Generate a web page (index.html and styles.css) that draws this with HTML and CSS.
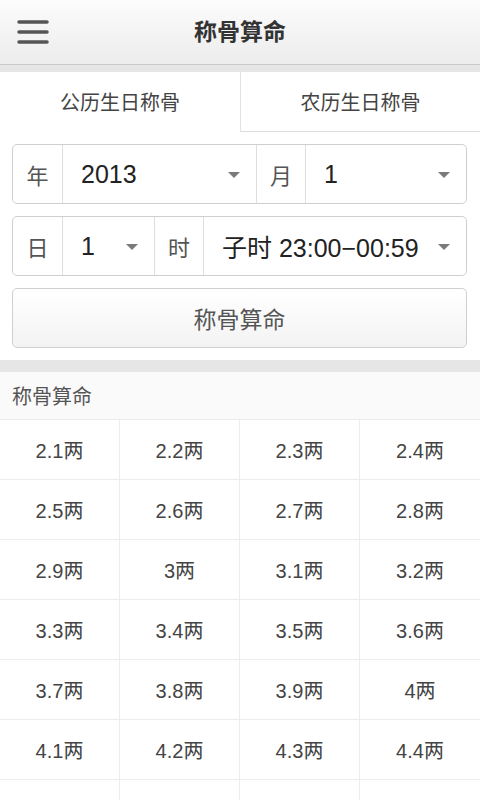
FILE: index.html
```html
<!DOCTYPE html>
<html lang="zh">
<head>
<meta charset="utf-8">
<link rel="stylesheet" href="styles.css">
</head>
<body>
<header class="topbar">
  <button class="menu" aria-label="menu">
    <svg width="32" height="24" viewBox="0 0 32 24"><g stroke="#555" stroke-width="3.5" stroke-linecap="round"><line x1="2" y1="2" x2="30" y2="2"/><line x1="2" y1="12" x2="30" y2="12"/><line x1="2" y1="22" x2="30" y2="22"/></g></svg>
  </button>
  <h1 class="title">称骨算命</h1>
</header>
<div class="band"></div>
<nav class="tabs">
  <div class="tab active">公历生日称骨</div>
  <div class="tab">农历生日称骨</div>
</nav>
<section class="form">
  <div class="selrow row1">
    <div class="lbl">年</div>
    <div class="val"><span>2013</span><i class="arrow"></i></div>
    <div class="lbl">月</div>
    <div class="val"><span>1</span><i class="arrow"></i></div>
  </div>
  <div class="selrow row2">
    <div class="lbl">日</div>
    <div class="val"><span>1</span><i class="arrow"></i></div>
    <div class="lbl">时</div>
    <div class="val"><span>子时 23:00−00:59</span><i class="arrow"></i></div>
  </div>
  <button class="calc">称骨算命</button>
</section>
<div class="band2"></div>
<div class="sechead">称骨算命</div>
<div class="grid">
  <div class="cell">2.1两</div><div class="cell">2.2两</div><div class="cell">2.3两</div><div class="cell">2.4两</div>
  <div class="cell">2.5两</div><div class="cell">2.6两</div><div class="cell">2.7两</div><div class="cell">2.8两</div>
  <div class="cell">2.9两</div><div class="cell">3两</div><div class="cell">3.1两</div><div class="cell">3.2两</div>
  <div class="cell">3.3两</div><div class="cell">3.4两</div><div class="cell">3.5两</div><div class="cell">3.6两</div>
  <div class="cell">3.7两</div><div class="cell">3.8两</div><div class="cell">3.9两</div><div class="cell">4两</div>
  <div class="cell">4.1两</div><div class="cell">4.2两</div><div class="cell">4.3两</div><div class="cell">4.4两</div>
  <div class="cell"></div><div class="cell"></div><div class="cell"></div><div class="cell"></div>
</div>
</body>
</html>
```
FILE: styles.css
```css
* { box-sizing: border-box; }
html, body { margin: 0; padding: 0; }
body {
  width: 480px;
  height: 800px;
  overflow: hidden;
  background: #fff;
  font-family: "Liberation Sans", "Noto Sans CJK SC", sans-serif;
  color: #444;
}
.topbar {
  height: 65px;
  background: linear-gradient(#fcfcfc, #ececec);
  border-bottom: 1px solid #c9c9c9;
  display: flex;
  align-items: center;
  justify-content: center;
  position: relative;
}
.menu {
  position: absolute;
  left: 17px;
  top: 20px;
  width: 32px;
  height: 24px;
  padding: 0;
  border: 0;
  background: none;
  display: block;
}
.menu svg { display: block; }
.title {
  margin: 0;
  font-size: 23px;
  font-weight: bold;
  color: #333;
  line-height: 1;
}
.band { height: 7px; background: #e6e6e6; }
.tabs {
  display: grid;
  grid-template-columns: 240px 1fr;
  height: 60px;
}
.tab {
  display: flex;
  align-items: center;
  justify-content: center;
  font-size: 20px;
  color: #444;
  background: #fff;
  border-bottom: 1px solid #ddd;
}
.tab + .tab { border-left: 1px solid #e2e2e2; }
.tab.active { border-bottom-color: transparent; }
.form {
  padding: 12px;
  display: flex;
  flex-direction: column;
  gap: 12px;
}
.selrow {
  display: grid;
  height: 60px;
  border: 1px solid #cfcfcf;
  border-radius: 5px;
  width: 455px;
}
.row1 { grid-template-columns: 49px 194px 49px 1fr; }
.row2 { grid-template-columns: 49px 92px 49px 1fr; }
.lbl, .val { display: flex; align-items: center; }
.lbl + .val, .val + .lbl { border-left: 1px solid #dedede; }
.lbl {
  justify-content: center;
  font-size: 22px;
  color: #555;
}
.val {
  justify-content: space-between;
  padding: 0 16px 0 18px;
  font-size: 25px;
  color: #222;
}
.arrow {
  width: 0;
  height: 0;
  border-left: 6px solid transparent;
  border-right: 6px solid transparent;
  border-top: 6px solid #7a7a7a;
  margin-top: 2px;
}
.calc {
  height: 60px;
  width: 455px;
  border: 1px solid #cfcfcf;
  border-radius: 5px;
  background: linear-gradient(#ffffff, #f3f3f3);
  font-family: inherit;
  font-size: 23px;
  color: #555;
  padding: 0;
}
.band2 { height: 12px; background: #e6e6e6; }
.sechead {
  height: 48px;
  background: #fafafa;
  border-bottom: 1px solid #ebebeb;
  padding-left: 12px;
  display: flex;
  align-items: center;
  font-size: 20px;
  color: #555;
}
.grid {
  display: grid;
  grid-template-columns: repeat(4, 120px);
  grid-auto-rows: 60px;
}
.cell {
  display: flex;
  align-items: center;
  justify-content: center;
  border-right: 1px solid #ececec;
  border-bottom: 1px solid #ececec;
  font-size: 20px;
  color: #444;
}
.cell:nth-child(4n) { border-right: 0; }
```
